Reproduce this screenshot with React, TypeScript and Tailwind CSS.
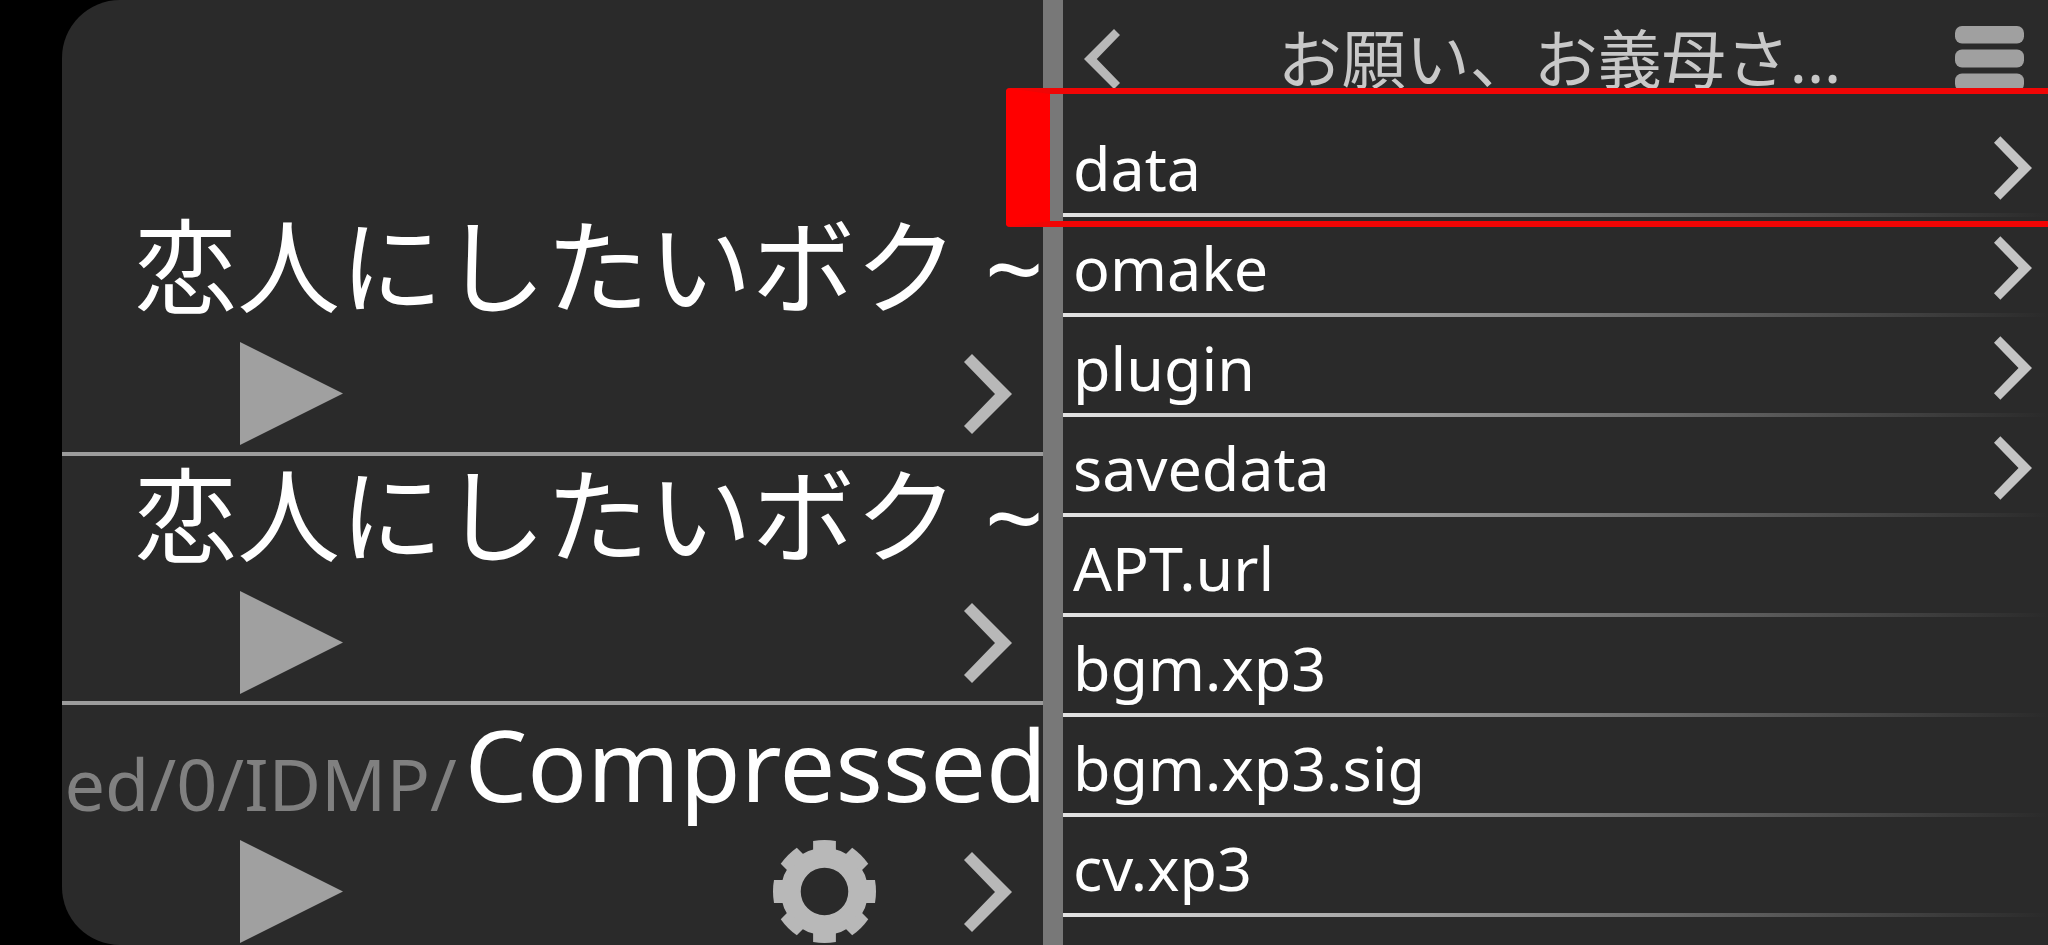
type Game = {
  path?: string;
  title: string;
  configurable?: boolean;
};

type Entry = {
  name: string;
  folder?: boolean;
};

const games: Game[] = [
  { title: "恋人にしたいボク ~" },
  { title: "恋人にしたいボク ~" },
  { path: "ed/0/IDMP/", title: "Compressed", configurable: true },
];

const entries: Entry[] = [
  { name: "data", folder: true },
  { name: "omake", folder: true },
  { name: "plugin", folder: true },
  { name: "savedata", folder: true },
  { name: "APT.url" },
  { name: "bgm.xp3" },
  { name: "bgm.xp3.sig" },
  { name: "cv.xp3" },
  { name: "cv.xp3.sig" },
];

function Chevron({ className }: { className?: string }) {
  return (
    <svg viewBox="0 0 48 80" className={className} fill="currentColor" aria-hidden="true">
      <path d="M8 0 48 40 8 80 0 72 31 40 0 8Z" />
    </svg>
  );
}

function PlayIcon() {
  return (
    <svg viewBox="0 0 103 103" className="size-[103px] text-[#a0a0a0]" fill="currentColor" aria-hidden="true">
      <path d="M0 0 103 51.5 0 103Z" />
    </svg>
  );
}

function GearIcon() {
  return (
    <svg viewBox="-52 -52 104 104" className="size-[103px] text-[#b8b8b8]" aria-hidden="true">
      <circle r="34" fill="none" stroke="currentColor" strokeWidth="20" />
      {[0, 45, 90, 135].map((angle) => (
        <g key={angle} transform={`rotate(${angle})`} fill="currentColor">
          <path d="M-11.5-40V-51Q0-53 11.5-51V-40Z" />
          <path d="M-11.5 40V51Q0 53 11.5 51V40Z" />
        </g>
      ))}
    </svg>
  );
}

function MenuIcon() {
  return (
    <svg viewBox="0 0 69 65" className="h-[65px] w-[69px] text-[#a0a0a0]" fill="currentColor" aria-hidden="true">
      <rect width="69" height="17.5" rx="7" />
      <rect y="23.5" width="69" height="18" rx="7" />
      <rect y="47.5" width="69" height="17.5" rx="7" />
    </svg>
  );
}

function GameRow({ path, title, configurable }: Game) {
  return (
    <li className="h-[249px] shrink-0 border-b-4 border-[#9c9c9c]">
      {path ? (
        <div className="-mr-1 flex h-[118px] items-end justify-end gap-2">
          <span className="whitespace-nowrap text-[72px] leading-[80px] text-[#808080]">{path}</span>
          <span className="whitespace-nowrap text-[99px] leading-[118px] text-white">{title}</span>
        </div>
      ) : (
        <div className="flex h-[118px] items-end pl-[72px]">
          <span className="whitespace-nowrap text-[103px] leading-[118px] text-white">{title}</span>
        </div>
      )}
      <div className="mt-[17px] flex items-center pr-[31px] pl-[178px]">
        <button type="button" aria-label="Play">
          <PlayIcon />
        </button>
        <div className="ml-auto flex items-center gap-[88px]">
          {configurable && (
            <button type="button" aria-label="Settings">
              <GearIcon />
            </button>
          )}
          <button type="button" aria-label="Open">
            <Chevron className="h-20 w-12 text-[#b8b8b8]" />
          </button>
        </div>
      </div>
    </li>
  );
}

function EntryRow({ name, folder }: Entry) {
  return (
    <li className="flex h-[100px] shrink-0 flex-col">
      <button type="button" className="flex flex-1 items-center justify-between pt-1.5 pr-4 pl-[10px] text-left">
        <span className="text-[61px] leading-[88px] text-white">{name}</span>
        {folder && <Chevron className="h-16 w-[38px] text-[#c4c4c4]" />}
      </button>
      <div className="h-1 bg-linear-to-r from-[#e4e4e4] to-[#2a2a2a]" />
    </li>
  );
}

export default function App() {
  return (
    <div className="flex h-screen overflow-hidden bg-black pl-[62px] font-['Noto_Sans','Noto_Sans_CJK_JP',sans-serif]">
      <div className="grid min-w-0 flex-1 grid-cols-[minmax(0,981fr)_20px_minmax(0,985fr)] overflow-hidden rounded-l-[58px] bg-[#2a2a2a]">
        <ul className="flex min-w-0 flex-col overflow-hidden pt-[207px]">
          {games.map((game, index) => (
            <GameRow key={index} {...game} />
          ))}
        </ul>
        <div className="bg-[#787878]" />
        <div className="relative min-w-0">
          <header className="flex h-[117px] items-center pr-6 pl-[21px]">
            <button type="button" aria-label="Back">
              <Chevron className="h-[60px] w-9 rotate-180 text-[#b8b8b8]" />
            </button>
            <h1 className="flex-1 whitespace-nowrap pl-11 text-center text-[64px] leading-[88px] text-[#c8c8c8]">お願い、お義母さ...</h1>
            <button type="button" aria-label="Menu">
              <MenuIcon />
            </button>
          </header>
          <ul className="flex flex-col">
            {entries.map((entry) => (
              <EntryRow key={entry.name} {...entry} />
            ))}
          </ul>
          {/* highlight around the data folder */}
          <div className="pointer-events-none absolute top-[88px] right-0 -left-[57px] h-[139px] rounded-l-[4px] border-y-6 border-l-44 border-y-[#f00505] border-l-[#ff0000]" />
        </div>
      </div>
    </div>
  );
}
